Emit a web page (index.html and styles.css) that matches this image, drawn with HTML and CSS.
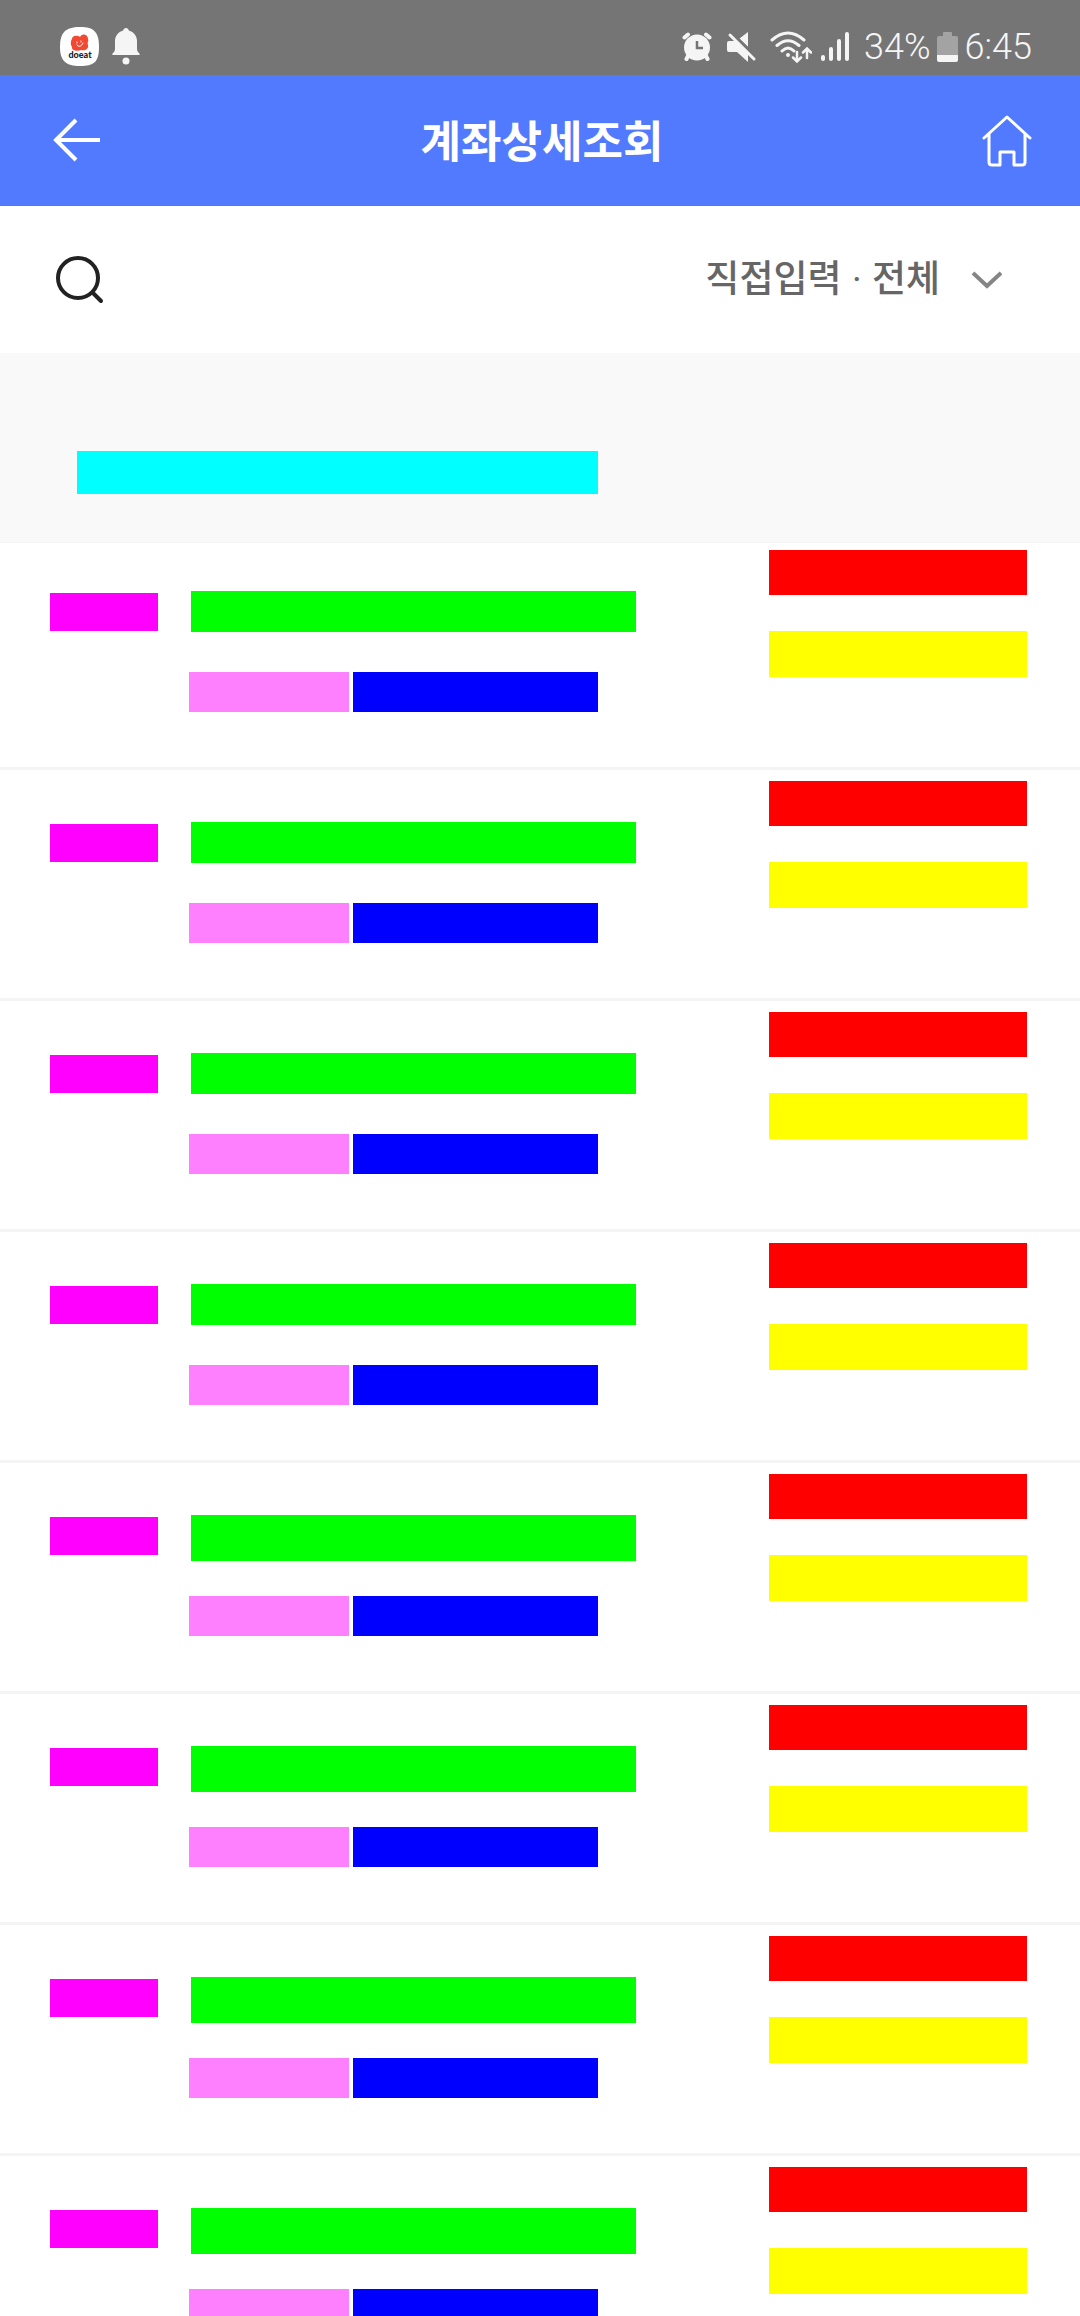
FILE: index.html
```html
<!DOCTYPE html>
<html lang="ko">
<head>
<meta charset="utf-8">
<meta name="viewport" content="width=device-width, initial-scale=1">
<title>계좌상세조회</title>
<link rel="stylesheet" href="styles.css">
</head>
<body>
<div class="app">
  <div class="status">
    <div class="status-group notices">
      <svg width="40" height="40" viewBox="0 0 40 40" role="img" aria-label="doeat">
        <path fill="#fff" d="M20 0C34 0 39 5 39 20S34 39 20 39 0 34 0 20 5 0 20 0Z"/>
        <path fill="#f04a32" d="M12 12C12 8 18 8 20 10C22 6 28 7 28 12C29 14 27 15 28 18C29 22 25 24 21 23C17 25 11 23 12 20C10 17 11 13 12 12Z"/>
        <path fill="none" stroke="#fff" stroke-linecap="round" d="M17 18Q20 22 23 16M17 15V16M21 14V15"/>
        <text class="logo-text" x="20" y="31" text-anchor="middle">doeat</text>
      </svg>
      <svg width="28" height="40" viewBox="0 0 28 40" fill="#f5f5f5" aria-hidden="true">
        <path d="M14 1C15.500 1 16.500 2 16.800 3.500C22 5 25 9 25 14V22C25 24 26 25 27.500 26.500C28 27.500 27.500 28 26.500 28H1.500C.5 28 0 27.500 .5 26.500C2 25 3 24 3 22V14C3 9 6 5 11.200 3.500C11.500 2 12.500 1 14 1Z"/>
        <circle cx="14" cy="34" r="3.500"/>
      </svg>
    </div>
    <div class="status-group system">
      <svg class="alarm" width="30" height="32" viewBox="0 0 30 32" aria-hidden="true">
        <g stroke="#f5f5f5" stroke-width="4" stroke-linecap="round" fill="none"><path d="M2.500 6.500L6 3.500M27.500 6.500L24 3.500M6 25L4.500 28M24 25L25.500 28"/></g>
        <circle cx="15" cy="16.500" r="13" fill="#f5f5f5"/>
        <path d="M15 10V17H21" fill="none" stroke="#757575" stroke-width="2.500"/>
      </svg>
      <svg class="mute" width="30" height="32" viewBox="0 0 30 32" aria-hidden="true">
        <path fill="#f5f5f5" d="M21 1V16L12.500 7.500ZM0 12Q0 10 2 10H8L21 23V31L10 21H2Q0 21 0 19Z"/>
        <path d="M5 2L30 26" stroke="#757575" stroke-width="2"/>
        <path d="M3 4L27 28" stroke="#f5f5f5" stroke-width="3" stroke-linecap="round"/>
      </svg>
      <svg class="wifi" width="42" height="32" viewBox="0 0 42 32" fill="none" stroke="#f5f5f5" stroke-width="3" stroke-linecap="round" aria-hidden="true">
        <path d="M2 9Q18 -5 34 9M7 14.500Q18 5 29 14.500M12 20Q18 14 24 20"/>
        <circle cx="18" cy="24" r="2" fill="#f5f5f5" stroke="none"/>
        <path stroke-width="2.500" d="M27 21V30M23 26.500L27 30.500L31 26.500M37 27V18M33 21.500L37 17.500L41 21.500"/>
      </svg>
      <svg class="signal" width="28" height="32" viewBox="0 0 28 32" stroke="#f5f5f5" stroke-width="4" stroke-linecap="round" aria-hidden="true">
        <path d="M2 26V28M10 18V28M18 10V28M26 3V28"/>
      </svg>
      <span class="status-text">34%</span>
      <svg class="battery" width="22" height="32" viewBox="0 0 22 32" aria-hidden="true">
        <path fill="#a3a3a3" d="M6 2Q6 1 7 1H14Q15 1 15 2V5H19Q21 5 21 7V24H0V7Q0 5 2 5H6Z"/>
        <path fill="#f5f5f5" d="M0 24H21V29Q21 31 19 31H2Q0 31 0 29Z"/>
      </svg>
      <span class="status-text">6:45</span>
    </div>
  </div>

  <header class="header">
    <button class="icon-button" type="button" aria-label="뒤로">
      <svg width="50" height="54" viewBox="0 0 50 54" fill="none" stroke="#fff" stroke-width="4"><path d="M48 26H5M24 6L4 26L24 46"/></svg>
    </button>
    <h1 class="title">계좌상세조회</h1>
    <a class="icon-button" href="#home" aria-label="홈">
      <svg width="50" height="54" viewBox="0 0 50 54" fill="none" stroke="#fff" stroke-width="3" stroke-linecap="round" stroke-linejoin="round"><path d="M2 24L25 3L48 24M7 20V48Q7 51 10 51H18V38H32V51H40Q43 51 43 48V20"/></svg>
    </a>
  </header>

  <div class="toolbar">
    <button class="icon-button" type="button" aria-label="검색">
      <svg width="50" height="50" viewBox="0 0 50 50" fill="none" stroke="#222" stroke-width="4" stroke-linecap="round"><circle cx="24" cy="23" r="20"/><path d="M39 38L47 46"/></svg>
    </button>
    <button class="filter" type="button">
      <span class="filter-label">직접입력 <span class="dot">·</span> 전체</span>
      <svg width="30" height="20" viewBox="0 0 30 20" fill="none" stroke="#858585" stroke-width="4"><path d="M1 3L15 16L29 3"/></svg>
    </button>
  </div>

  <div class="summary"><div class="block summary-block"></div></div>

  <main class="list">
    <article class="row"><div class="block date"></div><div class="details"><div class="block name"></div><div class="meta"><div class="block kind"></div><div class="block branch"></div></div></div><div class="amounts"><div class="block amount"></div><div class="block balance"></div></div></article>
    <article class="row"><div class="block date"></div><div class="details"><div class="block name"></div><div class="meta"><div class="block kind"></div><div class="block branch"></div></div></div><div class="amounts"><div class="block amount"></div><div class="block balance"></div></div></article>
    <article class="row"><div class="block date"></div><div class="details"><div class="block name"></div><div class="meta"><div class="block kind"></div><div class="block branch"></div></div></div><div class="amounts"><div class="block amount"></div><div class="block balance"></div></div></article>
    <article class="row"><div class="block date"></div><div class="details"><div class="block name"></div><div class="meta"><div class="block kind"></div><div class="block branch"></div></div></div><div class="amounts"><div class="block amount"></div><div class="block balance"></div></div></article>
    <article class="row"><div class="block date"></div><div class="details"><div class="block name tall"></div><div class="meta"><div class="block kind"></div><div class="block branch"></div></div></div><div class="amounts"><div class="block amount"></div><div class="block balance"></div></div></article>
    <article class="row"><div class="block date"></div><div class="details"><div class="block name tall"></div><div class="meta"><div class="block kind"></div><div class="block branch"></div></div></div><div class="amounts"><div class="block amount"></div><div class="block balance"></div></div></article>
    <article class="row"><div class="block date"></div><div class="details"><div class="block name tall"></div><div class="meta"><div class="block kind"></div><div class="block branch"></div></div></div><div class="amounts"><div class="block amount"></div><div class="block balance"></div></div></article>
    <article class="row"><div class="block date"></div><div class="details"><div class="block name tall"></div><div class="meta"><div class="block kind"></div><div class="block branch"></div></div></div><div class="amounts"><div class="block amount"></div><div class="block balance"></div></div></article>
  </main>
</div>
</body>
</html>
```
FILE: styles.css
```css
* { box-sizing: border-box; }

body {
  margin: 0;
  background: #fff;
  font-family: "Noto Sans CJK KR", "Noto Sans", sans-serif;
}

button {
  padding: 0;
  border: 0;
  background: none;
  font: inherit;
  cursor: pointer;
}

svg { display: block; flex: none; }

.app {
  display: flex;
  flex-direction: column;
  height: 100vh;
}

.status, .header, .toolbar, .summary { flex: none; }

/* Status bar */
.status {
  display: flex;
  align-items: center;
  justify-content: space-between;
  height: 75px;
  padding: 18px 48px 0 60px;
  background: #757575;
}

.status-group { display: flex; align-items: center; }
.notices { gap: 12px; }
.logo-text { font: 900 9px Lato, sans-serif; fill: #222; }

.alarm { margin-right: 15px; }
.mute { margin-right: 13px; }
.wifi { margin-right: 9px; }
.signal { margin-right: 15px; }
.battery { margin: 0 6px; }

.status-text {
  color: #f5f5f5;
  font: 300 36px/40px Roboto, sans-serif;
}

/* Title bar */
.header {
  display: flex;
  align-items: center;
  justify-content: space-between;
  height: 131px;
  padding: 0 48px 0 52px;
  background: #527aff;
}

.icon-button { display: block; }

.title {
  margin: 0;
  padding-bottom: 4px;
  color: #fff;
  font-size: 44px;
  line-height: 60px;
  font-weight: 700;
}

/* Search and filter */
.toolbar {
  display: flex;
  align-items: center;
  justify-content: space-between;
  height: 147px;
  padding: 0 78px 0 54px;
  background: #fff;
}

.filter {
  display: flex;
  align-items: center;
  gap: 32px;
  color: #666;
  font-size: 37px;
  line-height: 50px;
  font-weight: 500;
}

.filter-label { padding-bottom: 4px; }
.dot { font-family: Roboto, sans-serif; font-weight: 400; }

.summary {
  padding: 98px 77px 48px;
  border-bottom: 1px solid #f4f4f4;
  background: #f9f9f9;
}

.summary-block { width: 521px; max-width: 100%; height: 43px; background: #0ff; }

/* Transactions */
.list {
  flex: 1;
  min-height: 0;
  overflow-y: auto;
  scrollbar-width: none;
}

.row {
  display: flex;
  align-items: flex-start;
  padding: 11px 53px 55px 50px;
  border-bottom: 3px solid #f4f4f4;
}

.row:first-child { padding-top: 7px; }

.date { width: 108px; height: 38px; margin-top: 43px; background: #f0f; }

.details {
  display: grid;
  grid-template-rows: 81px 40px;
  margin: 41px auto 0 31px;
}

.name { width: 445px; height: 41px; margin-left: 2px; background: #0f0; }
.tall { height: 46px; }

.meta { display: flex; gap: 4px; }
.kind { width: 160px; background: #ff80ff; }
.branch { width: 245px; background: #00f; }

.amounts { display: grid; gap: 36px; width: 258px; }
.amount { height: 45px; background: #f00; }
.balance { height: 46px; background: #ff0; }
```
